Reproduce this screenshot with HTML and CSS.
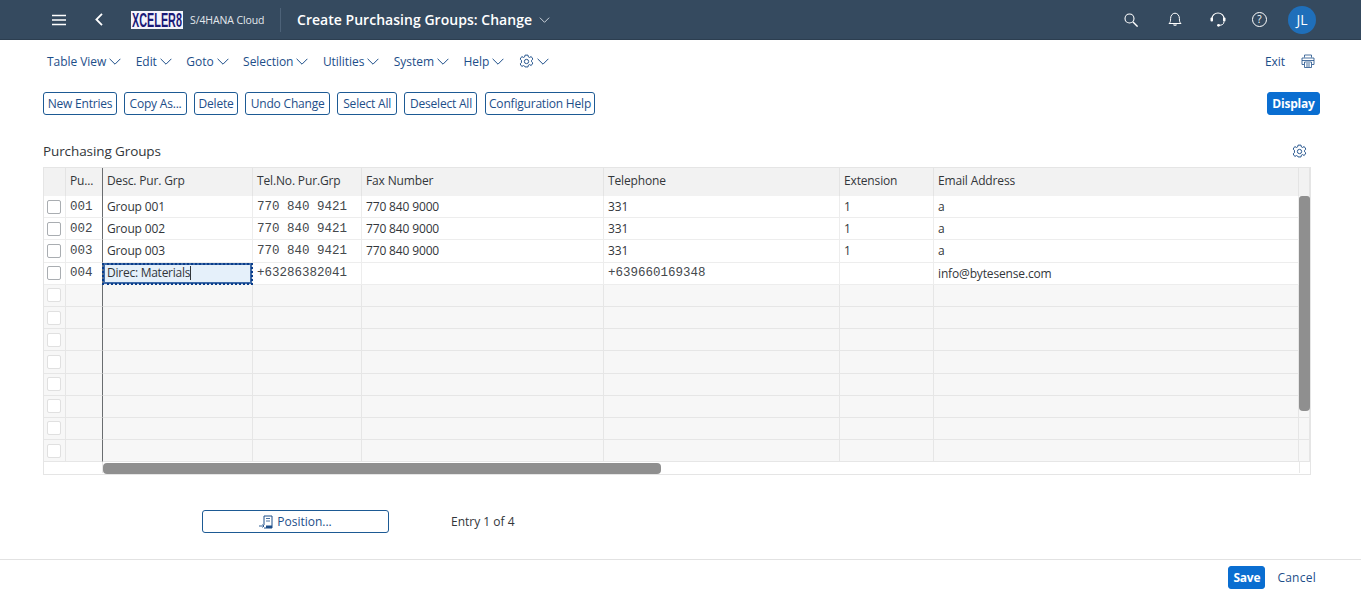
FILE: index.html
```html
<!DOCTYPE html>
<html lang="en">
<head>
<meta charset="utf-8">
<title>Create Purchasing Groups: Change</title>
<link rel="stylesheet" href="styles.css">
</head>
<body>
<svg class="defs" width="0" height="0" aria-hidden="true">
  <defs>
    <symbol id="chev" viewBox="0 0 12 7"><path d="M.6.8 6 6.2 11.4.8" fill="none" stroke="currentColor" stroke-width="1"/></symbol>
    <symbol id="gear" viewBox="0 0 16 16"><path d="M6.4 1.2h3.2l.4 1.9 1.3.6 1.7-1 1.8 2.7-1.4 1.3v1.6l1.4 1.3-1.8 2.7-1.7-1-1.3.6-.4 1.9H6.4L6 12.9l-1.3-.6-1.7 1-1.8-2.7 1.4-1.3V6.7L1.2 5.4 3 2.7l1.7 1L6 3.1z" fill="none" stroke="currentColor" stroke-width="1"/><circle cx="8" cy="8" r="2.3" fill="none" stroke="currentColor" stroke-width="1"/></symbol>
  </defs>
</svg>
<header class="shell">
  <svg class="ico-menu" width="14" height="12" viewBox="0 0 14 12"><path d="M0 1.5h14M0 6h14M0 10.5h14" stroke="#fff" stroke-width="1.6"/></svg>
  <svg class="ico-back" width="8" height="13" viewBox="0 0 8 13"><path d="M7 .8 1.4 6.5 7 12.2" fill="none" stroke="#fff" stroke-width="1.8"/></svg>
  <span class="logo"><span class="logo-text">XCELER8</span></span>
  <span class="product">S/4HANA Cloud</span>
  <span class="shell-sep"></span>
  <span class="app-title">Create Purchasing Groups: Change</span>
  <svg class="title-chev" width="11" height="6"><use href="#chev"/></svg>
  <span class="spacer"></span>
  <svg class="ico-search" width="14" height="14" viewBox="0 0 14 14"><circle cx="5.5" cy="5.5" r="4.5" fill="none" stroke="#fff" stroke-width="1.1"/><path d="m9 9 4.6 4.6" stroke="#fff" stroke-width="1.4"/></svg>
  <svg class="ico-bell" width="14" height="15" viewBox="0 0 14 15"><path d="M1 11.5c1.4-1.2 1.6-2.5 1.6-5C2.600 3.500 4.500 1.200 7 1.200s4.400 2.300 4.400 5.300c0 2.500.2 3.800 1.600 5z" fill="none" stroke="#fff" stroke-width="1"/><path d="M5 12.500c.2 1.800 3.800 1.800 4 0z" fill="#fff"/></svg>
  <svg class="ico-head" width="16" height="15" viewBox="0 0 16 15"><path d="M2 8V6.500a6 5.500 0 0 1 12 0V8" fill="none" stroke="#fff" stroke-width="1.200"/><rect x="0.500" y="5.500" width="2.500" height="4" rx="1" fill="#fff"/><rect x="13" y="5.500" width="2.500" height="4" rx="1" fill="#fff"/><path d="M14 9.500c0 2.800-2 3.800-5 3.800" fill="none" stroke="#fff"/><circle cx="8.500" cy="13.300" r="1.400" fill="#fff"/></svg>
  <span class="ico-help">?</span>
  <span class="avatar">JL</span>
</header>

<nav class="menubar">
  <a class="menu">Table View<svg class="chev" width="12" height="7"><use href="#chev"/></svg></a>
  <a class="menu">Edit<svg class="chev" width="12" height="7"><use href="#chev"/></svg></a>
  <a class="menu">Goto<svg class="chev" width="12" height="7"><use href="#chev"/></svg></a>
  <a class="menu">Selection<svg class="chev" width="12" height="7"><use href="#chev"/></svg></a>
  <a class="menu">Utilities<svg class="chev" width="12" height="7"><use href="#chev"/></svg></a>
  <a class="menu">System<svg class="chev" width="12" height="7"><use href="#chev"/></svg></a>
  <a class="menu">Help<svg class="chev" width="12" height="7"><use href="#chev"/></svg></a>
  <a class="menu"><svg class="gear" width="15" height="15"><use href="#gear"/></svg><svg class="chev" width="12" height="7"><use href="#chev"/></svg></a>
  <span class="spacer"></span>
  <a class="menu exit">Exit</a>
  <svg class="ico-print" width="14" height="14" viewBox="0 0 14 14"><path d="M3.500 3.500V1h7v2.500M3 10.500H1V4h12v6.500h-2" fill="none" stroke="currentColor" stroke-width=".8"/><path d="M1 6.500h12" stroke="currentColor" stroke-width=".8"/><path d="M3.500 8h7v5.500h-7zM5 10h4M5 12h4" fill="none" stroke="currentColor" stroke-width=".8"/></svg>
</nav>

<div class="toolbar">
  <button class="btn w-new">New Entries</button>
  <button class="btn w-copy">Copy As...</button>
  <button class="btn w-del">Delete</button>
  <button class="btn w-undo">Undo Change</button>
  <button class="btn w-sel">Select All</button>
  <button class="btn w-desel">Deselect All</button>
  <button class="btn w-conf">Configuration Help</button>
  <span class="spacer"></span>
  <button class="btn primary w-display">Display</button>
</div>

<div class="section-head">
  <h2 class="section-title">Purchasing Groups</h2>
  <svg class="gear table-gear" width="15" height="15"><use href="#gear"/></svg>
</div>

<section class="table">
  <div class="row head">
    <div class="c"></div><div class="c">Pu...</div><div class="c fix">Desc. Pur. Grp</div><div class="c">Tel.No. Pur.Grp</div><div class="c">Fax Number</div><div class="c">Telephone</div><div class="c">Extension</div><div class="c">Email Address</div><div class="c"></div>
  </div>
  <div class="row">
    <div class="c"><span class="check"></span></div><div class="c mono">001</div><div class="c fix">Group 001</div><div class="c mono">770 840 9421</div><div class="c">770 840 9000</div><div class="c">331</div><div class="c">1</div><div class="c">a</div><div class="c"></div>
  </div>
  <div class="row">
    <div class="c"><span class="check"></span></div><div class="c mono">002</div><div class="c fix">Group 002</div><div class="c mono">770 840 9421</div><div class="c">770 840 9000</div><div class="c">331</div><div class="c">1</div><div class="c">a</div><div class="c"></div>
  </div>
  <div class="row">
    <div class="c"><span class="check"></span></div><div class="c mono">003</div><div class="c fix">Group 003</div><div class="c mono">770 840 9421</div><div class="c">770 840 9000</div><div class="c">331</div><div class="c">1</div><div class="c">a</div><div class="c"></div>
  </div>
  <div class="row">
    <div class="c"><span class="check"></span></div><div class="c mono">004</div><div class="c fix active"><span class="caret">Direc: Materials</span></div><div class="c mono">+63286382041</div><div class="c"></div><div class="c mono">+639660169348</div><div class="c"></div><div class="c">info@bytesense.com</div><div class="c"></div>
  </div>
  <div class="row empty"><div class="c"><span class="check"></span></div><div class="c"></div><div class="c fix"></div><div class="c"></div><div class="c"></div><div class="c"></div><div class="c"></div><div class="c"></div><div class="c"></div></div>
  <div class="row empty"><div class="c"><span class="check"></span></div><div class="c"></div><div class="c fix"></div><div class="c"></div><div class="c"></div><div class="c"></div><div class="c"></div><div class="c"></div><div class="c"></div></div>
  <div class="row empty"><div class="c"><span class="check"></span></div><div class="c"></div><div class="c fix"></div><div class="c"></div><div class="c"></div><div class="c"></div><div class="c"></div><div class="c"></div><div class="c"></div></div>
  <div class="row empty"><div class="c"><span class="check"></span></div><div class="c"></div><div class="c fix"></div><div class="c"></div><div class="c"></div><div class="c"></div><div class="c"></div><div class="c"></div><div class="c"></div></div>
  <div class="row empty"><div class="c"><span class="check"></span></div><div class="c"></div><div class="c fix"></div><div class="c"></div><div class="c"></div><div class="c"></div><div class="c"></div><div class="c"></div><div class="c"></div></div>
  <div class="row empty"><div class="c"><span class="check"></span></div><div class="c"></div><div class="c fix"></div><div class="c"></div><div class="c"></div><div class="c"></div><div class="c"></div><div class="c"></div><div class="c"></div></div>
  <div class="row empty"><div class="c"><span class="check"></span></div><div class="c"></div><div class="c fix"></div><div class="c"></div><div class="c"></div><div class="c"></div><div class="c"></div><div class="c"></div><div class="c"></div></div>
  <div class="row empty"><div class="c"><span class="check"></span></div><div class="c"></div><div class="c fix"></div><div class="c"></div><div class="c"></div><div class="c"></div><div class="c"></div><div class="c"></div><div class="c"></div></div>
  <div class="track"><div class="track-left"></div><div class="track-mid"></div><div class="track-right"></div></div>
  <div class="thumb-v"></div>
  <div class="thumb-h"></div>
</section>

<div class="position-row">
  <button class="btn position">
    <svg class="ico-pos" width="15" height="14" viewBox="0 0 15 14"><path d="M5 10V1h8v12H5" fill="none" stroke="currentColor"/><path d="M7 3.500h4M7 6h4" stroke="currentColor" stroke-width=".8"/><path d="M7 10.500h6v2.500H7z" fill="currentColor"/><path d="M0 11h5M3.500 9.500 5 11l-1.500 1.500" fill="none" stroke="currentColor" stroke-width=".9"/></svg>
    Position...
  </button>
  <span class="entry">Entry 1 of 4</span>
</div>

<footer class="footer">
  <button class="btn primary w-save">Save</button>
  <a class="menu cancel">Cancel</a>
</footer>
</body>
</html>
```

FILE: styles.css
```css
* { box-sizing: border-box; }
html, body { margin: 0; padding: 0; }
body {
  width: 1361px;
  height: 590px;
  overflow: hidden;
  display: flex;
  flex-direction: column;
  background: #fff;
  color: #32363a;
  font-family: "Open Sans", "Noto Sans", sans-serif;
  font-size: 12px;
}
.defs { position: absolute; }
.spacer { flex: 1; }

/* shell */
.shell {
  height: 40px;
  flex: none;
  display: flex;
  align-items: center;
  background: #354a5f;
  border-bottom: 1px solid #2c3e50;
  color: #fff;
  padding-left: 52px;
}
.ico-back { margin-left: 29px; }
.logo {
  margin-left: 28px;
  width: 52px;
  height: 18px;
  background: #f4f4fa;
  display: flex;
  align-items: center;
  justify-content: center;
}
.logo-text {
  font: 700 10.800px/12px "Liberation Sans", sans-serif;
  color: #1a1a78;
  transform: scaleY(1.8);
  white-space: nowrap;
}
.product { margin-left: 7px; width: 75px; font-size: 10.5px; color: #e3e8ed; white-space: nowrap; letter-spacing: -.1px; }
.shell-sep { margin-left: 15px; width: 1px; height: 24px; background: #4d6278; }
.app-title { margin-left: 16px; width: 236px; font-size: 14px; font-weight: 600; white-space: nowrap; letter-spacing: .03px; }
.title-chev { margin-left: 6px; color: #e3e8ed; }
.ico-search { margin-right: 30px; }
.ico-bell { margin-right: 28px; }
.ico-head { margin-right: 26px; }
.ico-help {
  width: 15px; height: 15px; margin-right: 21px;
  border: 1px solid #fff; border-radius: 50%;
  font-size: 10px; line-height: 13px; text-align: center;
}
.avatar {
  width: 28px; height: 28px; margin-right: 45px;
  border-radius: 50%;
  background: #1f6fba;
  font-size: 14px;
  line-height: 28px; text-align: center;
}

/* menu */
.menubar {
  height: 42px;
  flex: none;
  display: flex;
  align-items: center;
  padding: 0 46px 0 47px;
  color: #1d4e89;
}
.menu { display: flex; align-items: center; color: #1d4e89; white-space: nowrap; letter-spacing: -.05px; margin-right: 14.5px; }
.chev { margin-left: 3px; margin-top: 1px; }
.gear { color: #1d4e89; }
.exit { margin-right: 16px; }

/* buttons */
.toolbar {
  height: 23px;
  margin-top: 10px;
  flex: none;
  display: flex;
  gap: 7.3px;
  padding: 0 41px 0 43px;
}
.btn {
  height: 23px;
  padding: 0;
  border: 1px solid #1d5a94;
  border-radius: 3px;
  background: #fff;
  color: #1d4e89;
  font: 12px "Open Sans", "Noto Sans", sans-serif;
  letter-spacing: -.2px;
  white-space: nowrap;
}
.btn.primary { background: #0a6ed1; border-color: #0a6ed1; color: #fff; font-weight: 700; }
.w-new { width: 74px; }
.w-copy { width: 62.5px; }
.w-del { width: 44px; }
.w-undo { width: 84.5px; }
.w-sel { width: 60px; }
.w-desel { width: 73px; }
.w-conf { width: 110.5px; }
.w-display { width: 53px; }
.w-save { width: 37px; }

/* section */
.section-head {
  height: 52px;
  flex: none;
  display: flex;
  align-items: flex-end;
  justify-content: space-between;
  padding: 0 54px 7px 43px;
}
.section-title { margin: 0; font-size: 13.5px; font-weight: 400; color: #32363a; line-height: 18px; letter-spacing: -.1px; }
.table-gear { margin-bottom: 1px; color: #1d4e89; }

/* table */
.table {
  position: relative;
  margin-left: 43px;
  width: 1268px;
  height: 308px;
  flex: none;
  border: 1px solid #e5e5e5;
}
.row {
  display: grid;
  grid-template-columns: 22px 37px 150px 109px 242px 236px 94px 365px 11px;
  height: 22.2px;
  background: #fff;
}
.row.head { height: 28px; background: #f2f2f2; }
.head .c { padding-bottom: 4px; }
.row.empty { background: #f7f7f7; }
.c {
  display: flex;
  align-items: center;
  padding-left: 4px;
  border-right: 1px solid #ededed;
  border-bottom: 1px solid #ededed;
  white-space: nowrap;
  letter-spacing: -.15px;
  overflow: hidden;
}
.empty .c { border-color: #e6e6e6; }
.c:first-child { padding-left: 3px; }
.head .c { border-bottom: 0; border-right-color: #e4e4e4; }
.c.fix { border-left: 1px solid #6a6d70; margin-left: -1px; }
.empty .c.fix { border-left-color: #6a6d70; }
.mono { font: 12.5px "Liberation Mono", monospace; letter-spacing: 0; color: #44484c; }
.check { width: 14px; height: 14px; border: 1px solid #a9adb1; border-radius: 2px; background: #fff; }
.empty .check { border-color: #e0e0e0; }
.active {
  background: #e5f0fa;
  outline: 2px dotted #0a3d8a;
  outline-offset: -2px;
  box-shadow: inset 0 0 0 2px #3e6aa8;
}
.caret { border-right: 1px solid #32363a; line-height: 14px; letter-spacing: -.25px; }
.track { height: 11px; display: grid; grid-template-columns: 59px 1fr 11px; }
.track-left { border-right: 1px solid #e8e8e8; }
.track-right { border-left: 1px solid #e8e8e8; }
.thumb-v { position: absolute; top: 28px; right: 0; width: 11px; height: 215px; border-radius: 3px 3px 4px 4px; background: #8f8f8f; }
.thumb-h { position: absolute; bottom: 0; left: 59px; width: 558px; height: 11px; border-radius: 4px; background: #8f8f8f; }

/* position */
.position-row {
  margin-top: 35px;
  padding-left: 202px;
  flex: none;
  display: flex;
  align-items: center;
  gap: 62px;
}
.position { width: 187px; display: flex; align-items: center; justify-content: center; gap: 3px; letter-spacing: 0; }
.ico-pos { margin-top: 1px; }
.entry { color: #32363a; letter-spacing: 0; }

/* footer */
.footer {
  margin-top: 26px;
  flex: 1;
  border-top: 1px solid #e2e2e2;
  display: flex;
  justify-content: flex-end;
  align-items: flex-start;
  padding: 6px 45px 0 0;
}
.cancel { margin: 3px 0 0 12px; letter-spacing: .25px; }
```
